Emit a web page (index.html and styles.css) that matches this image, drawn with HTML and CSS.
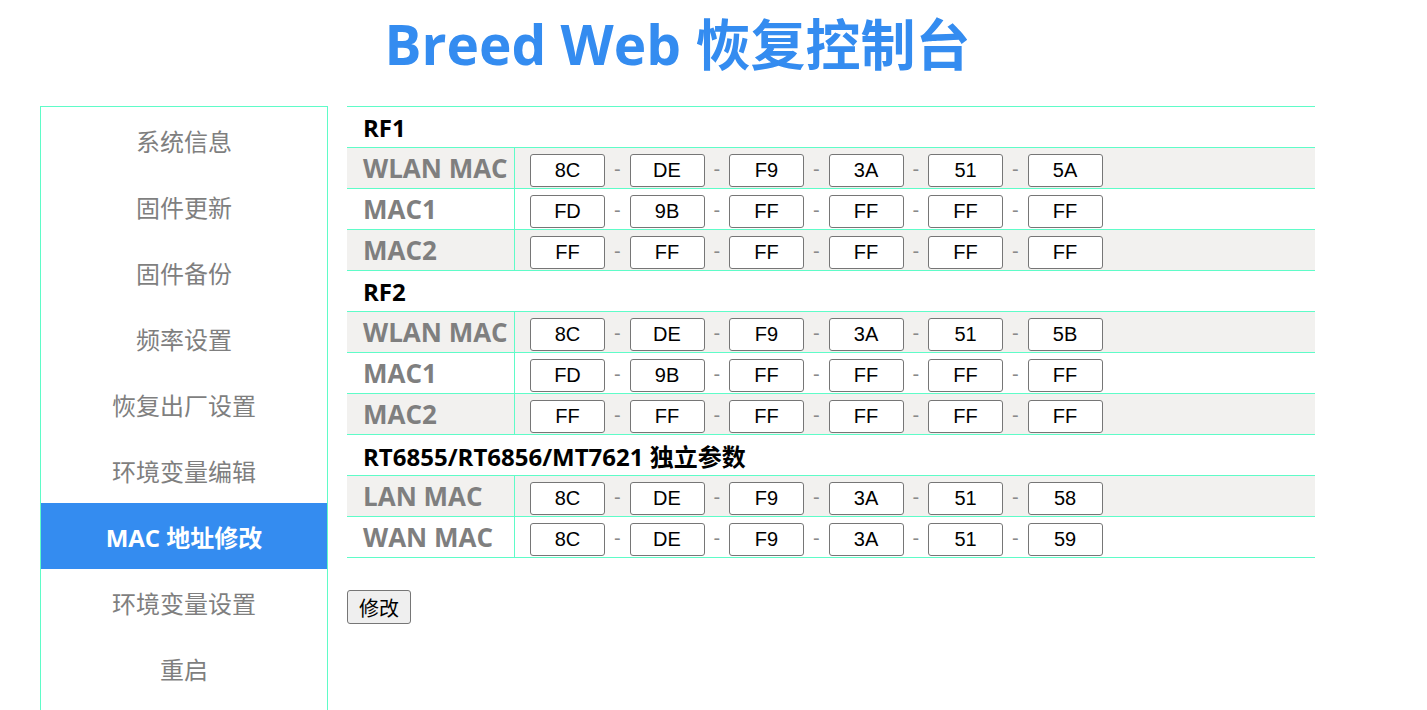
FILE: index.html
```html
<!DOCTYPE html>
<html lang="zh-CN">
<head>
<meta charset="utf-8">
<title>Breed Web 恢复控制台</title>
<link rel="stylesheet" href="styles.css">
</head>
<body>
<div class="page">
  <h1 class="title">Breed Web 恢复控制台</h1>
  <div class="layout">
    <nav class="sidebar">
      <div class="menu-item">系统信息</div>
      <div class="menu-item">固件更新</div>
      <div class="menu-item">固件备份</div>
      <div class="menu-item">频率设置</div>
      <div class="menu-item">恢复出厂设置</div>
      <div class="menu-item">环境变量编辑</div>
      <div class="menu-item active">MAC 地址修改</div>
      <div class="menu-item">环境变量设置</div>
      <div class="menu-item">重启</div>
    </nav>
    <main class="content">
      <table class="mac-table">
        <tr class="section"><td colspan="2">RF1</td></tr>
        <tr class="alt"><td class="label">WLAN MAC</td><td><div class="fields"><input class="oct" value="8C"><span class="sep">-</span><input class="oct" value="DE"><span class="sep">-</span><input class="oct" value="F9"><span class="sep">-</span><input class="oct" value="3A"><span class="sep">-</span><input class="oct" value="51"><span class="sep">-</span><input class="oct" value="5A"></div></td></tr>
        <tr><td class="label">MAC1</td><td><div class="fields"><input class="oct" value="FD"><span class="sep">-</span><input class="oct" value="9B"><span class="sep">-</span><input class="oct" value="FF"><span class="sep">-</span><input class="oct" value="FF"><span class="sep">-</span><input class="oct" value="FF"><span class="sep">-</span><input class="oct" value="FF"></div></td></tr>
        <tr class="alt"><td class="label">MAC2</td><td><div class="fields"><input class="oct" value="FF"><span class="sep">-</span><input class="oct" value="FF"><span class="sep">-</span><input class="oct" value="FF"><span class="sep">-</span><input class="oct" value="FF"><span class="sep">-</span><input class="oct" value="FF"><span class="sep">-</span><input class="oct" value="FF"></div></td></tr>
        <tr class="section"><td colspan="2">RF2</td></tr>
        <tr class="alt"><td class="label">WLAN MAC</td><td><div class="fields"><input class="oct" value="8C"><span class="sep">-</span><input class="oct" value="DE"><span class="sep">-</span><input class="oct" value="F9"><span class="sep">-</span><input class="oct" value="3A"><span class="sep">-</span><input class="oct" value="51"><span class="sep">-</span><input class="oct" value="5B"></div></td></tr>
        <tr><td class="label">MAC1</td><td><div class="fields"><input class="oct" value="FD"><span class="sep">-</span><input class="oct" value="9B"><span class="sep">-</span><input class="oct" value="FF"><span class="sep">-</span><input class="oct" value="FF"><span class="sep">-</span><input class="oct" value="FF"><span class="sep">-</span><input class="oct" value="FF"></div></td></tr>
        <tr class="alt"><td class="label">MAC2</td><td><div class="fields"><input class="oct" value="FF"><span class="sep">-</span><input class="oct" value="FF"><span class="sep">-</span><input class="oct" value="FF"><span class="sep">-</span><input class="oct" value="FF"><span class="sep">-</span><input class="oct" value="FF"><span class="sep">-</span><input class="oct" value="FF"></div></td></tr>
        <tr class="section"><td colspan="2">RT6855/RT6856/MT7621 独立参数</td></tr>
        <tr class="alt"><td class="label">LAN MAC</td><td><div class="fields"><input class="oct" value="8C"><span class="sep">-</span><input class="oct" value="DE"><span class="sep">-</span><input class="oct" value="F9"><span class="sep">-</span><input class="oct" value="3A"><span class="sep">-</span><input class="oct" value="51"><span class="sep">-</span><input class="oct" value="58"></div></td></tr>
        <tr><td class="label">WAN MAC</td><td><div class="fields"><input class="oct" value="8C"><span class="sep">-</span><input class="oct" value="DE"><span class="sep">-</span><input class="oct" value="F9"><span class="sep">-</span><input class="oct" value="3A"><span class="sep">-</span><input class="oct" value="51"><span class="sep">-</span><input class="oct" value="59"></div></td></tr>
      </table>
      <button class="submit" type="button">修改</button>
    </main>
  </div>
</div>
</body>
</html>
```
FILE: styles.css
```css
body {
  margin: 0;
  background: #fff;
  font-family: "Open Sans", "Noto Sans CJK SC", sans-serif;
}

.page {
  width: 1275px;
  margin-left: 40px;
}

.title {
  margin: 6px 0 24px;
  height: 76px;
  line-height: 76px;
  text-align: center;
  font-size: 55px;
  font-weight: 700;
  color: #348cf0;
  white-space: nowrap;
}

.layout {
  display: flex;
  align-items: flex-start;
  gap: 19px;
}

.sidebar {
  width: 288px;
  flex: none;
  box-sizing: border-box;
  border: 1px solid #5ffcc8;
  padding-bottom: 40px;
}

.menu-item {
  height: 66px;
  display: flex;
  align-items: center;
  justify-content: center;
  font-size: 24px;
  color: #7f7f7f;
}

.menu-item.active {
  background: #348cf0;
  color: #fff;
  font-weight: 700;
}

.content {
  width: 968px;
}

.mac-table {
  width: 968px;
  border-collapse: separate;
  border-spacing: 0;
  border-top: 1px solid #5ffcc8;
}

.mac-table td {
  padding: 0;
  height: 40px;
  border-bottom: 1px solid #5ffcc8;
  vertical-align: middle;
}

.section td {
  padding-left: 16px;
  font-size: 24px;
  font-weight: 700;
  color: #000;
}

.alt td {
  background: #f2f1ef;
}

.mac-table td.label {
  width: 151px;
  padding-left: 16px;
  border-right: 1px solid #5ffcc8;
  font-size: 26px;
  font-weight: 700;
  color: #7f7f7f;
  white-space: nowrap;
}

.fields {
  display: flex;
  align-items: flex-start;
  height: 40px;
  box-sizing: border-box;
  padding: 6px 0 0 15px;
}

.oct {
  width: 75px;
  height: 33px;
  box-sizing: border-box;
  margin: 0;
  padding: 0;
  border: 1px solid #767676;
  border-radius: 3px;
  background: #fff;
  text-align: center;
  font-family: "Liberation Sans", Arial, sans-serif;
  font-size: 20px;
  color: #000;
}

.sep {
  width: 24.5px;
  height: 33px;
  line-height: 31px;
  text-align: center;
  font-family: "Liberation Sans", Arial, sans-serif;
  font-size: 20px;
  color: #8a8a8a;
}

.submit {
  margin-top: 32px;
  height: 34px;
  padding: 0 11px;
  border: 1px solid #767676;
  border-radius: 3px;
  background: #efefef;
  font-family: "Noto Sans CJK SC", sans-serif;
  font-size: 20px;
  color: #000;
}
```
